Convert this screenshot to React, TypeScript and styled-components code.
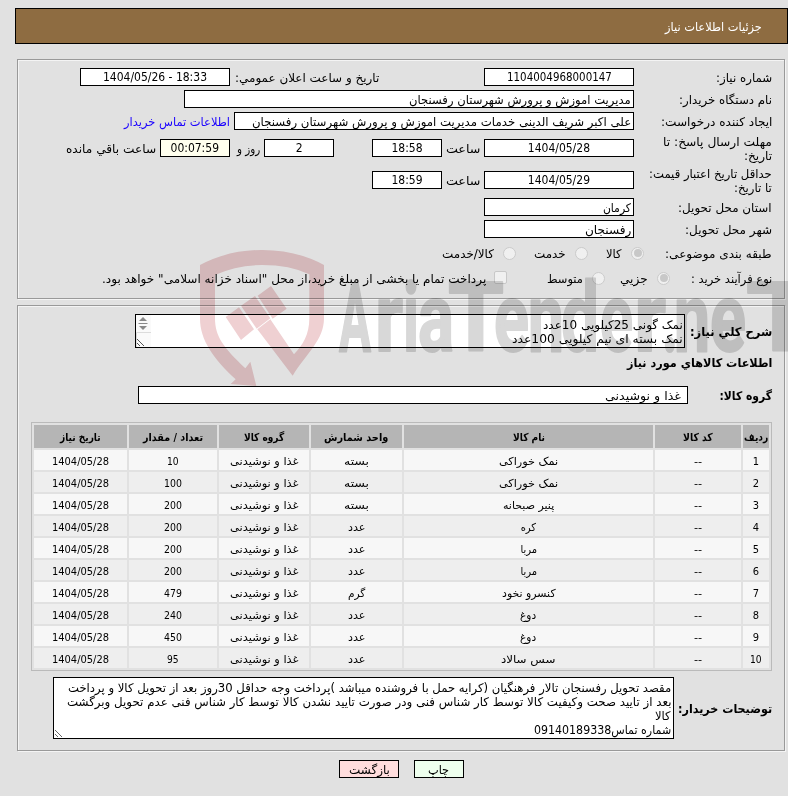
import React, { useLayoutEffect, useRef, useState } from 'react';
import styled, { createGlobalStyle } from 'styled-components';

const GlobalStyle = createGlobalStyle`
  * {
    box-sizing: border-box;
  }

  body {
    margin: 0;
    background: #e1e1e1;
    color: #000;
    font-family: Tahoma, 'DejaVu Sans Condensed', 'DejaVu Sans', sans-serif;
    font-size: 12px;
    line-height: 14px;
    overflow: hidden;
  }
`;

const Page = styled.div`
  position: relative;
  direction: rtl;
  width: 788px;
  height: 796px;
  padding: 8px 0 0 15px;
  overflow: hidden;
`;

const TitleBar = styled.header`
  display: flex;
  align-items: center;
  height: 36px;
  padding: 2px 25px 0 0;
  border: 1px solid #000;
  background: #8e6c41;
  color: #fff;
`;

const Panel = styled.section<{ $top: number; $height: number }>`
  height: ${(p) => p.$height}px;
  margin: ${(p) => p.$top}px 3px 0 2px;
  padding: 6px 12px 0 13px;
  border: 1px solid #999;
  box-shadow: inset 1px 1px 0 #f4f4f4, 1px 1px 0 #f4f4f4;
`;

const Row = styled.div<{ $height?: number; $top?: number }>`
  display: flex;
  align-items: center;
  height: ${(p) => p.$height || 22}px;
  margin-top: ${(p) => p.$top || 0}px;
`;

const Label = styled.div<{ $width?: number; $bold?: boolean }>`
  display: flex;
  flex-direction: column;
  flex: none;
  width: ${(p) => p.$width || 138}px;
  padding-top: 1px;
  font-weight: ${(p) => (p.$bold ? 'bold' : 'normal')};
`;

const Field = styled.div<{ $width: number; $center?: boolean; $bg?: string; $pad?: number }>`
  display: flex;
  flex: none;
  align-items: center;
  justify-content: ${(p) => (p.$center ? 'center' : 'flex-start')};
  width: ${(p) => p.$width}px;
  height: 18px;
  padding: ${(p) => (p.$center ? 0 : 2)}px ${(p) => p.$pad || 2}px 0;
  border: 1px solid #000;
  background: ${(p) => p.$bg || '#fff'};
`;

const Caption = styled.span<{ $right?: number; $left?: number }>`
  display: flex;
  padding-top: 2px;
  margin-right: ${(p) => p.$right ?? 4}px;
  margin-left: ${(p) => p.$left ?? 4}px;
`;

const ContactLink = styled.a`
  display: flex;
  padding-top: 2px;
  margin-right: 4px;
  color: #1a00ff;
`;

const Radio = styled.span<{ $checked?: boolean; $right?: number }>`
  display: flex;
  align-items: center;
  justify-content: center;
  flex: none;
  width: 13px;
  height: 13px;
  margin-right: ${(p) => p.$right || 0}px;
  border: 1px solid #cbcbcb;
  border-radius: 50%;
  background: #f0f0f0;

  &::after {
    content: '';
    width: 8px;
    height: 8px;
    border-radius: 50%;
    background: ${(p) => (p.$checked ? '#c8c8c8' : 'transparent')};
  }
`;

const Checkbox = styled.span`
  flex: none;
  width: 13px;
  height: 13px;
  margin: -2px 40px 0 0;
  border: 1px solid #c8c8c8;
  border-radius: 2px;
  background: #f0f0f0;
`;

const TextArea = styled.div<{ $width: number; $height: number; $pad: string }>`
  position: relative;
  flex: none;
  display: flex;
  flex-direction: column;
  width: ${(p) => p.$width}px;
  height: ${(p) => p.$height}px;
  padding: ${(p) => p.$pad};
  border: 1px solid #000;
  background: #fff;
`;

const Grip = styled.svg`
  position: absolute;
  left: 0;
  bottom: 0;
`;

const Goods = styled.table`
  width: 741px;
  margin: 18px 0 0;
  table-layout: fixed;
  border: 1px solid #bababa;
  border-collapse: separate;
  border-spacing: 2px;
  font-size: 11px;

  th,
  td {
    height: 20px;
    padding: 3px 0 0;
    text-align: center;
    vertical-align: middle;
    line-height: 14px;
    background: #f7f7f7;
  }

  th {
    height: 23px;
    background: #b5b5b5;
  }

  tbody tr:nth-child(even) td {
    background: #eee;
  }
`;

const Actions = styled.footer`
  display: flex;
  justify-content: center;
  gap: 15px;
  margin: 9px 0 0 0;
`;

const Button = styled.button<{ $width: number; $bg: string }>`
  display: flex;
  align-items: center;
  justify-content: center;
  width: ${(p) => p.$width}px;
  height: 18px;
  padding: 1px 0 0;
  border: 1px solid #000;
  background: ${(p) => p.$bg};
  color: #000;
  font: inherit;
`;

const Watermark = styled.svg`
  position: absolute;
  left: 0;
  top: 0;
  direction: ltr;
  pointer-events: none;
  mix-blend-mode: multiply;
`;

const FitBox = styled.span<{ $width: number }>`
  display: inline-block;
  width: ${(p) => p.$width}px;
  height: 14px;
  white-space: nowrap;
  text-align: right;
  vertical-align: middle;
`;

const FitText = styled.span`
  display: inline-block;
  line-height: 14px;
  transform-origin: right center;
`;

interface FitProps {
  w: number;
  ltr?: boolean;
  children: string;
}

// Keeps a piece of text at a fixed width whatever font is available
const Fit: React.FC<FitProps> = ({ w, ltr, children }) => {
  const ref = useRef<HTMLSpanElement>(null);
  const [scale, setScale] = useState(1);

  useLayoutEffect(() => {
    if (ref.current && ref.current.offsetWidth) {
      setScale(w / ref.current.offsetWidth);
    }
  }, [w, children]);

  return (
    <FitBox $width={w}>
      <FitText ref={ref} dir={ltr ? 'ltr' : 'rtl'} style={{ transform: `scaleX(${scale})` }}>
        {children}
      </FitText>
    </FitBox>
  );
};

interface Item {
  name: string;
  nameWidth: number;
  unit: string;
  unitWidth: number;
  count: string;
}

const items: Item[] = [
  { name: 'نمک خوراکی', nameWidth: 59, unit: 'بسته', unitWidth: 25, count: '10' },
  { name: 'نمک خوراکی', nameWidth: 59, unit: 'بسته', unitWidth: 25, count: '100' },
  { name: 'پنیر صبحانه', nameWidth: 51, unit: 'بسته', unitWidth: 25, count: '200' },
  { name: 'کره', nameWidth: 15, unit: 'عدد', unitWidth: 18, count: '200' },
  { name: 'مربا', nameWidth: 17, unit: 'عدد', unitWidth: 18, count: '200' },
  { name: 'مربا', nameWidth: 17, unit: 'عدد', unitWidth: 18, count: '200' },
  { name: 'کنسرو نخود', nameWidth: 54, unit: 'گرم', unitWidth: 17, count: '479' },
  { name: 'دوغ', nameWidth: 16, unit: 'عدد', unitWidth: 18, count: '240' },
  { name: 'دوغ', nameWidth: 16, unit: 'عدد', unitWidth: 18, count: '450' },
  { name: 'سس سالاد', nameWidth: 54, unit: 'عدد', unitWidth: 18, count: '95' },
];

const columns = [
  { title: 'ردیف', width: 26, text: 24 },
  { title: 'کد کالا', width: 86, text: 30 },
  { title: 'نام کالا', width: 249, text: 32 },
  { title: 'واحد شمارش', width: 91, text: 64 },
  { title: 'گروه کالا', width: 90, text: 40 },
  { title: 'تعداد / مقدار', width: 88, text: 60 },
  { title: 'تاریخ نیاز', width: 93, text: 41 },
];

const markLetters: [string, number, number][] = [
  ['A', 339, 32],
  ['r', 375, 28],
  ['i', 403, 16],
  ['a', 418, 36],
  ['T', 448, 56],
  ['e', 494, 35],
  ['n', 528, 36],
  ['d', 561, 38],
  ['e', 600, 33],
  ['r', 634, 32],
  ['.', 662, 16],
  ['n', 674, 36],
  ['e', 710, 36],
  ['T', 746, 72],
];

const Logo: React.FC = () => (
  <Watermark width="788" height="386" viewBox="0 0 788 386">
    <g transform="translate(190 240) scale(0.3333)" fill="#efd0d2">
      <path d="M30 75Q115 30 216 30Q320 30 402 75V235C402 300 350 340 308 407L202 268L241 238L312 343C338 315 358 285 358 235V103Q300 75 216 75Q140 75 75 105V235C75 290 100 322 166 385L181 365L199 438L122 432L137 418C70 355 30 300 30 235Z" />
      <path d="M153 197L195 168L241 235L200 266Z" />
      <path d="M203 167L243 138L290 206L248 236Z" />
      <path d="M107 231L147 202L192 268L153 300Z" />
    </g>
    <g fill="#d8d8d8" stroke="#d8d8d8" strokeWidth="2" strokeLinejoin="round" fontFamily="Roboto, sans-serif" fontWeight="700" fontSize="96">
      {markLetters.map(([letter, x, width]) => (
        <text key={x} x={x} y={351} textLength={width} lengthAdjust="spacingAndGlyphs">
          {letter}
        </text>
      ))}
    </g>
  </Watermark>
);

const App: React.FC = () => {
  return (
    <Page>
      <GlobalStyle />
      <TitleBar>
        <Fit w={97}>جزئیات اطلاعات نیاز</Fit>
      </TitleBar>

      <Panel $top={15} $height={240}>
        <Row>
          <Label><Fit w={56}>شماره نیاز:</Fit></Label>
          <Field $width={150} $center><Fit w={105} ltr>1104004968000147</Fit></Field>
          <Caption $right={105} $left={5}><Fit w={144}>تاریخ و ساعت اعلان عمومي:</Fit></Caption>
          <Field $width={150} $center><Fit w={104} ltr>1404/05/26 - 18:33</Fit></Field>
        </Row>
        <Row>
          <Label><Fit w={93}>نام دستگاه خریدار:</Fit></Label>
          <Field $width={450}><Fit w={222}>مدیریت اموزش و پرورش شهرستان رفسنجان</Fit></Field>
        </Row>
        <Row>
          <Label><Fit w={111}>ایجاد کننده درخواست:</Fit></Label>
          <Field $width={400}>
            <Fit w={379}>علی اکبر شریف الدینی خدمات مدیریت اموزش و پرورش شهرستان رفسنجان</Fit>
          </Field>
          <ContactLink><Fit w={106}>اطلاعات تماس خریدار</Fit></ContactLink>
        </Row>
        <Row $height={32}>
          <Label>
            <Fit w={109}>مهلت ارسال پاسخ: تا</Fit>
            <Fit w={28}>تاریخ:</Fit>
          </Label>
          <Field $width={150} $center><Fit w={62} ltr>1404/05/28</Fit></Field>
          <Caption><Fit w={34}>ساعت</Fit></Caption>
          <Field $width={70} $center><Fit w={31} ltr>18:58</Fit></Field>
          <Caption $right={38} $left={0} />
          <Field $width={70} $center><Fit w={7} ltr>2</Fit></Field>
          <Caption $left={7}><Fit w={23}>روز و</Fit></Caption>
          <Field $width={70} $center $bg="#ffffee"><Fit w={48} ltr>00:07:59</Fit></Field>
          <Caption><Fit w={90}>ساعت باقي مانده</Fit></Caption>
        </Row>
        <Row $height={32}>
          <Label>
            <Fit w={123}>حداقل تاریخ اعتبار قیمت:</Fit>
            <Fit w={38}>تا تاریخ:</Fit>
          </Label>
          <Field $width={150} $center><Fit w={62} ltr>1404/05/29</Fit></Field>
          <Caption><Fit w={34}>ساعت</Fit></Caption>
          <Field $width={70} $center><Fit w={31} ltr>18:59</Fit></Field>
        </Row>
        <Row>
          <Label><Fit w={94}>استان محل تحویل:</Fit></Label>
          <Field $width={150}><Fit w={28}>کرمان</Fit></Field>
        </Row>
        <Row>
          <Label><Fit w={87}>شهر محل تحویل:</Fit></Label>
          <Field $width={150}><Fit w={46}>رفسنجان</Fit></Field>
        </Row>
        <Row $height={26}>
          <Label $width={128}><Fit w={107}>طبقه بندی موضوعی:</Fit></Label>
          <Radio $checked />
          <Caption $right={9} $left={0}><Fit w={16}>کالا</Fit></Caption>
          <Radio $right={18} />
          <Caption $right={9} $left={0}><Fit w={32}>خدمت</Fit></Caption>
          <Radio $right={18} />
          <Caption $right={9} $left={0}><Fit w={52}>کالا/خدمت</Fit></Caption>
        </Row>
        <Row $height={24}>
          <Label $width={102}><Fit w={81}>نوع فرآیند خرید :</Fit></Label>
          <Radio $checked />
          <Caption $right={9} $left={0}><Fit w={28}>جزیي</Fit></Caption>
          <Radio $right={15} />
          <Caption $right={9} $left={0}><Fit w={36}>متوسط</Fit></Caption>
          <Checkbox />
          <Caption $right={8} $left={0}>
            <Fit w={384}>پرداخت تمام یا بخشی از مبلغ خرید،از محل "اسناد خزانه اسلامی" خواهد بود.</Fit>
          </Caption>
        </Row>
      </Panel>

      <Panel $top={6} $height={446}>
        <Row $height={34} $top={2}>
          <Label $width={87} $bold><Fit w={82}>شرح كلي نیاز:</Fit></Label>
          <TextArea $width={550} $height={34} $pad="3px 1px 0">
            <Fit w={140}>نمک گونی 25کیلویی 10عدد</Fit>
            <Fit w={171}>نمک بسته ای نیم کیلویی 100عدد</Fit>
            <Grip width="15" height="32" viewBox="0 0 15 32">
              <rect width="15" height="32" fill="#fafafa" />
              <path d="M3 6L7 2L11 6ZM3 11L7 15L11 11Z" fill="#8a8a8a" />
              <path d="M2.5 8.5H11.5" stroke="#8a8a8a" />
              <path d="M0.5 32V17.5H15" stroke="#dcdcdc" fill="none" />
              <path d="M1 24L8 31M1 28L4 31" stroke="#555" />
            </Grip>
          </TextArea>
        </Row>
        <Row $height={28}>
          <Label $width={145} $bold><Fit w={145}>اطلاعات كالاهاي مورد نیاز</Fit></Label>
        </Row>
        <Row $height={18} $top={10}>
          <Label $width={84} $bold><Fit w={53}>گروه کالا:</Fit></Label>
          <Field $width={550} $pad={6}><Fit w={76}>غذا و نوشیدنی</Fit></Field>
        </Row>

        <Goods>
          <colgroup>
            {columns.map((col) => (
              <col key={col.title} width={col.width} />
            ))}
          </colgroup>
          <thead>
            <tr>
              {columns.map((col) => (
                <th key={col.title}><Fit w={col.text}>{col.title}</Fit></th>
              ))}
            </tr>
          </thead>
          <tbody>
            {items.map((item, index) => (
              <tr key={index}>
                <td><Fit w={index === 9 ? 12 : 6} ltr>{String(index + 1)}</Fit></td>
                <td><Fit w={8} ltr>--</Fit></td>
                <td><Fit w={item.nameWidth}>{item.name}</Fit></td>
                <td><Fit w={item.unitWidth}>{item.unit}</Fit></td>
                <td><Fit w={69}>غذا و نوشیدنی</Fit></td>
                <td><Fit w={item.count.length * 6} ltr>{item.count}</Fit></td>
                <td><Fit w={57} ltr>1404/05/28</Fit></td>
              </tr>
            ))}
          </tbody>
        </Goods>

        <Row $height={62} $top={6}>
          <Label $width={98} $bold><Fit w={94}>توضیحات خریدار:</Fit></Label>
          <TextArea $width={621} $height={62} $pad="3px 2px 0">
            <Fit w={603}>مقصد تحویل رفسنجان تالار فرهنگیان (کرایه حمل با فروشنده میباشد )پرداخت وجه حداقل 30روز بعد از تحویل کالا و پرداخت</Fit>
            <Fit w={604}>بعد از تایید صحت وکیفیت کالا توسط کار شناس فنی ودر صورت تایید نشدن کالا توسط کار شناس فنی عدم تحویل وبرگشت</Fit>
            <Fit w={16}>کالا</Fit>
            <Fit w={137}>شماره تماس09140189338</Fit>
            <Grip width="10" height="10" viewBox="0 0 10 10">
              <path d="M1 2L8 9M1 6L4 9" stroke="#666" />
            </Grip>
          </TextArea>
        </Row>
      </Panel>

      <Actions>
        <Button $width={50} $bg="#eeffee"><Fit w={21}>چاپ</Fit></Button>
        <Button $width={60} $bg="#ffdddd"><Fit w={41}>بازگشت</Fit></Button>
      </Actions>
      <Logo />
    </Page>
  );
};

export default App;
